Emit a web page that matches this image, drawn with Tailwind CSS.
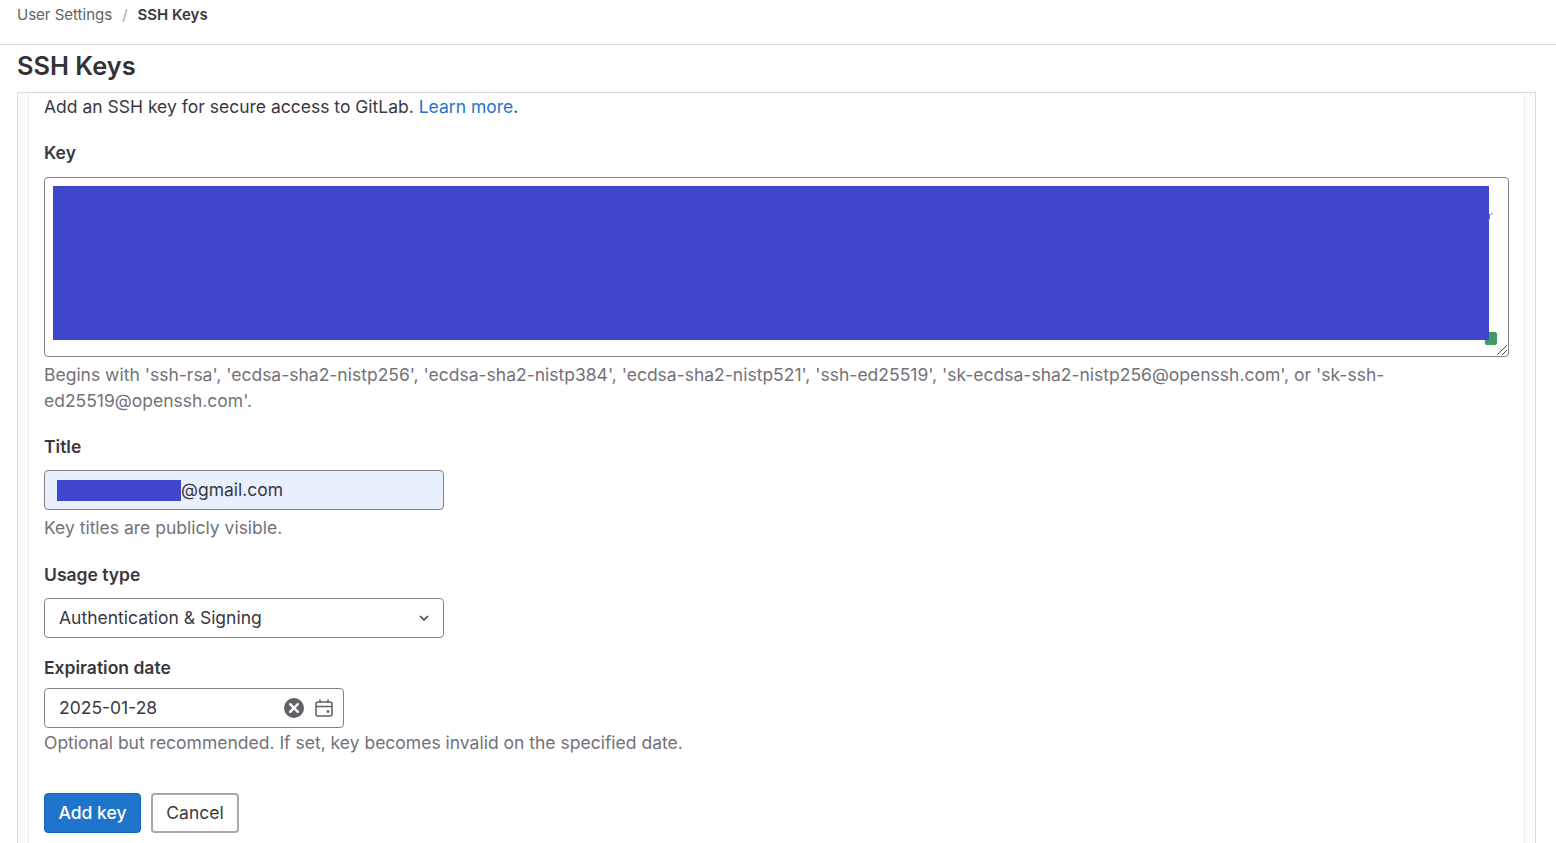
<!DOCTYPE html>
<html lang="en">
<head>
    <meta charset="UTF-8">
    <meta name="viewport" content="width=device-width, initial-scale=1.0">
    <title>SSH Keys</title>
    <script src="https://cdn.jsdelivr.net/npm/@tailwindcss/browser@4"></script>
</head>
<body class="bg-white h-[843px] overflow-hidden font-['Inter',sans-serif] text-[#3a383f]">

    <nav class="h-[45px] border-b border-[#dcdcde] pl-[17px] pt-[6px] flex items-start gap-[10px] text-[15px] leading-[18px]">
        <span class="text-[#626168]">User Settings</span>
        <span class="text-[#a4a3a8]">/</span>
        <span class="font-semibold">SSH Keys</span>
    </nav>

    <h1 class="h-[47px] pl-[17px] pt-[3px] text-[25.4px] leading-[36px] font-semibold text-[#333238]">SSH Keys</h1>

    <div class="mx-[17px] w-[1519px] h-[751px] border-t border-x border-[#dcdcde] bg-[#fbfafd] px-[10px]">
        <div class="h-full bg-white border-x border-[#ececef] px-[15px]">
            <p class="text-[17.5px] leading-[26px] mt-px">Add an SSH key for secure access to GitLab. <a href="#" class="text-[#1f75cb]">Learn more</a>.</p>

            <label class="block mt-[20px] text-[17.5px] leading-[26px] font-semibold">Key</label>
            <div class="relative mt-[11px] h-[180px] border border-[#808085] rounded-[4px] bg-white">
                <div class="absolute left-[1440px] top-[154px] w-[12px] h-[13px] rounded-[3px] bg-[#429b5e] shadow-[0_0_1px_#429b5e]"></div>
                <div class="absolute left-[8px] top-[8px] w-[1436px] h-[154px] bg-[#3f48cc]"></div>
                <svg class="absolute left-[1444px] top-[35px]" width="4" height="6" viewBox="0 0 4 6" fill="none" stroke="#77767c" stroke-width="1">
                    <path d="M4 .5 1.5 1.5M.5 1v5"/>
                </svg>
                <svg class="absolute right-0 bottom-0" width="12" height="12" viewBox="0 0 12 12" fill="none" stroke="#555" stroke-width="1">
                    <path d="M1 11 11 1M6 11l5-5"/>
                </svg>
            </div>
            <p class="mt-[5px] text-[17.5px] leading-[26px] text-[#737278] w-[1400px]">Begins with 'ssh-rsa', 'ecdsa-sha2-nistp256', 'ecdsa-sha2-nistp384', 'ecdsa-sha2-nistp521', 'ssh-ed25519', 'sk-ecdsa-sha2-nistp256@openssh.com', or 'sk-ssh-ed25519@openssh.com'.</p>

            <label class="block mt-[20px] text-[17.5px] leading-[26px] font-semibold">Title</label>
            <div class="mt-[10px] w-[400px] h-[40px] flex items-center border border-[#808085] rounded-[4px] bg-[#e8f0fe] pl-[12px] text-[17.5px]">
                <span class="w-[124px] h-[21px] bg-[#3f48cc]"></span>
                <span class="pt-px">@gmail.com</span>
            </div>
            <p class="mt-[5px] text-[17.5px] leading-[26px] text-[#737278]">Key titles are publicly visible.</p>

            <label class="block mt-[21px] text-[17.5px] leading-[26px] font-semibold">Usage type</label>
            <div class="mt-[10px] w-[400px] h-[40px] flex items-center justify-between border border-[#808085] rounded-[4px] pl-[14px] pr-[12px] text-[17.5px]">
                <span class="pt-px">Authentication &amp; Signing</span>
                <svg width="14" height="14" viewBox="0 0 14 14" fill="none" stroke="#444" stroke-width="1.7" stroke-linecap="round" stroke-linejoin="round">
                    <path d="M3.5 5.5 7 9l3.5-3.5"/>
                </svg>
            </div>

            <label class="block mt-[17px] text-[17.5px] leading-[26px] font-semibold">Expiration date</label>
            <div class="mt-[7px] w-[300px] h-[40px] flex items-center border border-[#808085] rounded-[4px] pl-[14px] text-[17.5px]">
                <span class="flex-1 pt-px">2025-01-28</span>
                <svg class="mr-[10px]" width="20" height="20" viewBox="0 0 20 20">
                    <circle cx="10" cy="10" r="10" fill="#626168"/>
                    <path d="M6.2 6.2l7.6 7.6M13.8 6.2l-7.6 7.6" stroke="#fff" stroke-width="2.4" stroke-linecap="round"/>
                </svg>
                <svg class="mr-[9px]" width="20" height="20" viewBox="0 0 20 20" fill="none" stroke="#626168" stroke-width="1.6">
                    <rect x="2" y="4" width="16" height="14" rx="2"/>
                    <path d="M2 8.5h16M6 1.5V5M14 1.5V5"/>
                    <circle cx="14" cy="13.5" r=".6" fill="#626168"/>
                </svg>
            </div>
            <p class="mt-[2px] text-[17.5px] leading-[26px] text-[#737278]">Optional but recommended. If set, key becomes invalid on the specified date.</p>

            <div class="mt-[37px] flex gap-[10px]">
                <button class="w-[97px] h-[40px] pt-px rounded-[4px] bg-[#1f75cb] text-white text-[17.5px] font-medium border border-[#1068bf]">Add key</button>
                <button class="w-[88px] h-[40px] pt-px rounded-[4px] bg-white text-[17.5px] border-2 border-[#a8a8aa]">Cancel</button>
            </div>
        </div>
    </div>

</body>
</html>
